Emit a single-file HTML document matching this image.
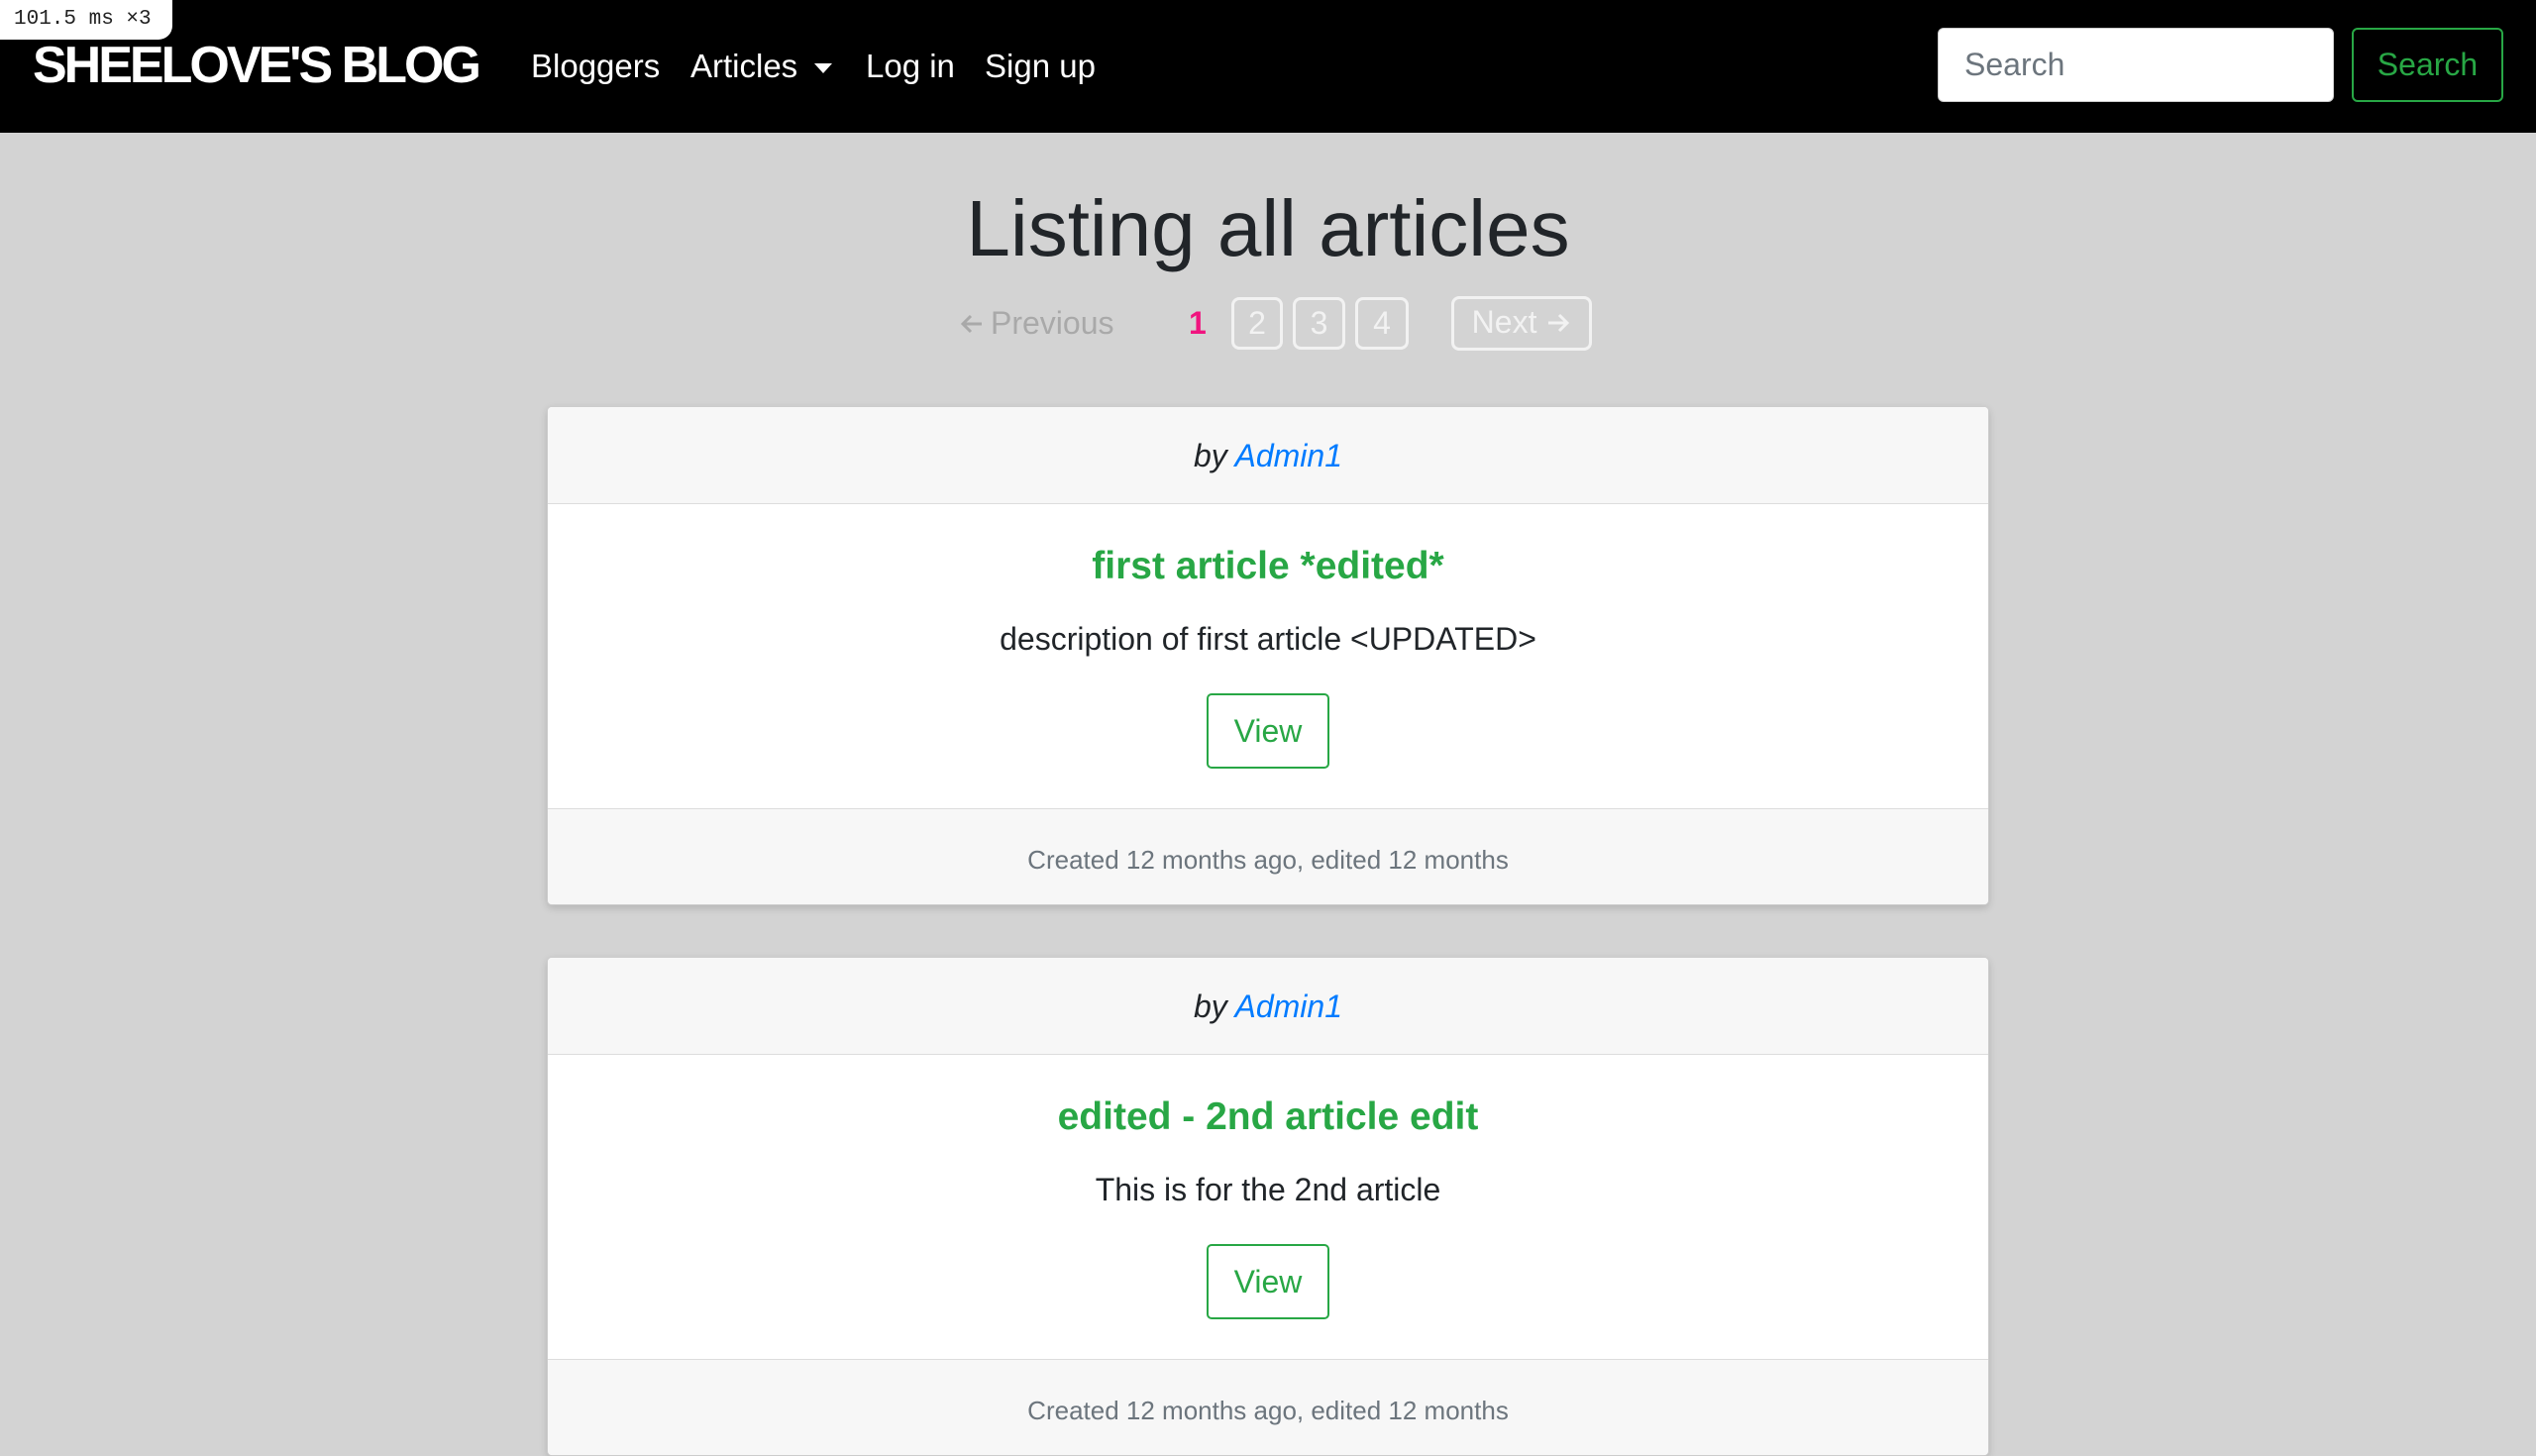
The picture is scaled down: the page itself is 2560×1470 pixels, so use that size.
<!DOCTYPE html>
<html><head><meta charset="utf-8"><style>
*{box-sizing:border-box;margin:0;padding:0}
body{width:2560px;height:1436px;overflow:hidden;background:#d3d3d3;font-family:"Liberation Sans",sans-serif;position:relative;color:#212529}
.nav{position:absolute;left:0;top:0;width:2560px;height:134px;background:#000}
.a{position:absolute;white-space:nowrap}
.brand{left:33px;top:36px;font-size:52px;font-weight:bold;color:#fff;letter-spacing:-3px}
.nl{top:48px;font-size:33px;color:#fff}
.search{left:1956px;top:28px;width:400px;height:75px;background:#fff;border-radius:6px;border:1px solid #ccc;font-size:32px;color:#6c757d;padding:18px 26px}
.sbtn{left:2374px;top:28px;width:153px;height:75px;border:2px solid #28a745;border-radius:6px;color:#28a745;font-size:32px;text-align:center;line-height:71px}
.title{left:0;width:2560px;text-align:center;top:185px;font-size:80px}
.pg{font-size:32px;top:308px}
.box{border:3px solid #f2f2f2;border-radius:8px;color:#f2f2f2;text-align:center;font-size:32px;line-height:47px;top:300px;height:53px}
.card{position:absolute;left:552px;width:1456px;height:504px;background:#fff;border:1px solid #ccc;border-radius:5px;box-shadow:0 3px 8px rgba(0,0,0,.15);overflow:hidden}
.ch{height:98px;background:#f7f7f7;border-bottom:1px solid #ddd;text-align:center;font-style:italic;font-size:32px;line-height:98px}
.ch span{color:#007bff}
.cb{height:308px;text-align:center;border-bottom:1px solid #ddd}
.ct{font-size:39px;color:#28a745;font-weight:bold;padding-top:41px;height:118px}
.cd{font-size:32px;height:73px}
.v{display:inline-block;width:124px;height:76px;border:2px solid #28a745;border-radius:5px;color:#28a745;font-size:32px;line-height:72px}
.cf{height:98px;background:#f7f7f7;text-align:center;font-size:26px;color:#6c757d;line-height:102px}
.badge{left:0;top:0;width:174px;height:40px;background:#fff;border-radius:0 0 14px 0;font-family:"Liberation Mono",monospace;font-size:21px;padding:8px 14px;color:#222}
</style></head><body>
<div class="nav"></div>
<div class="a brand">SHEELOVE'S BLOG</div>
<div class="a nl" style="left:536px">Bloggers</div>
<div class="a nl" style="left:697px">Articles <span style="display:inline-block;width:0;height:0;border-left:9px solid transparent;border-right:9px solid transparent;border-top:10px solid #fff;vertical-align:middle;margin-left:8px"></span></div>
<div class="a nl" style="left:874px">Log in</div>
<div class="a nl" style="left:994px">Sign up</div>
<div class="a search">Search</div>
<div class="a sbtn">Search</div>
<div class="a badge">101.5 ms ×3</div>
<div class="a title">Listing all articles</div>
<div class="a pg" style="left:968px;color:#a9a9a9"><svg width="26" height="26" viewBox="0 0 26 26" style="vertical-align:-3px;margin-right:6px"><path d="M23 13H4M12 5l-8 8 8 8" fill="none" stroke="#a9a9a9" stroke-width="3"/></svg>Previous</div>
<div class="a pg" style="left:1200px;color:#f0147f;font-weight:bold">1</div>
<div class="a box" style="left:1243px;width:52px">2</div>
<div class="a box" style="left:1305px;width:53px">3</div>
<div class="a box" style="left:1368px;width:54px">4</div>
<div class="a box" style="left:1465px;width:142px;top:299px;height:55px">Next <svg width="26" height="26" viewBox="0 0 26 26" style="vertical-align:-3px"><path d="M3 13h19M14 5l8 8-8 8" fill="none" stroke="#f2f2f2" stroke-width="3"/></svg></div>
<div class="card" style="top:410px">
<div class="ch">by <span>Admin1</span></div>
<div class="cb"><div class="ct">first article *edited*</div><div class="cd">description of first article &lt;UPDATED&gt;</div><div class="v">View</div></div>
<div class="cf">Created 12 months ago, edited 12 months</div>
</div>
<div class="card" style="top:966px">
<div class="ch">by <span>Admin1</span></div>
<div class="cb"><div class="ct">edited - 2nd article edit</div><div class="cd">This is for the 2nd article</div><div class="v">View</div></div>
<div class="cf">Created 12 months ago, edited 12 months</div>
</div>
</body></html>
